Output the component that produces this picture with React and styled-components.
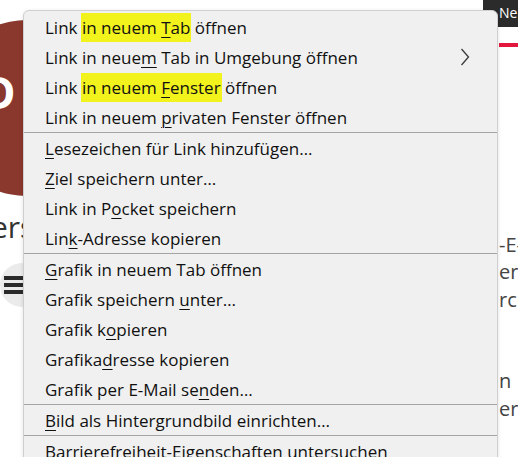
import React from "react";
import styled, { createGlobalStyle } from "styled-components";

const GlobalStyle = createGlobalStyle`
  html, body {
    margin: 0;
    padding: 0;
    overflow: hidden;
    background: #ffffff;
  }
`;

const Page = styled.div`
  position: relative;
  display: flex;
  width: 518px;
  height: 457px;
  overflow: hidden;
  background: #ffffff;
  font-family: "Open Sans", "Noto Sans", sans-serif;
`;

// left part of the page behind the menu
const Sidebar = styled.div`
  width: 120px;
  flex-shrink: 0;
  display: flex;
  flex-direction: column;
  align-items: flex-start;
`;

const Avatar = styled.div`
  flex-shrink: 0;
  box-sizing: border-box;
  width: 176px;
  height: 176px;
  margin: 20px 0 0 -61px;
  padding: 50px 0 0 44px;
  border-radius: 50%;
  background: #8a372d;
  color: #ffffff;
  font: 700 44px/1 "Open Sans", sans-serif;
`;

const UserName = styled.div`
  margin: 13px 0 0 -27px;
  font-size: 30px;
  line-height: 36px;
  color: #333333;
  white-space: nowrap;
`;

const MenuButton = styled.div`
  display: flex;
  flex-direction: column;
  justify-content: center;
  gap: 3px;
  box-sizing: border-box;
  width: 60px;
  height: 44px;
  margin-top: 18px;
  padding-left: 4px;
  border-radius: 22px;
  background: #ebebeb;
`;

const Bar = styled.span`
  display: block;
  width: 22px;
  height: 4px;
  background: #2a2a2a;
`;

const Middle = styled.div`
  flex: 1;
`;

// right part of the page behind the menu
const Aside = styled.div`
  width: 35px;
  flex-shrink: 0;
  display: flex;
  flex-direction: column;
  overflow: hidden;
`;

const NewButton = styled.div`
  height: 27px;
  padding-left: 16px;
  background: #2b2b2b;
  color: #ffffff;
  font-size: 14px;
  line-height: 26px;
  white-space: nowrap;
`;

const RedRule = styled.div`
  height: 4px;
  margin: 16px 0 0 16px;
  background: #e3173e;
`;

const Article = styled.div`
  margin: 184px 0 0 16px;
  font-size: 20px;
  line-height: 27.3px;
  color: #444444;
  white-space: nowrap;
`;

const Para = styled.p`
  margin: 0 0 ${(p) => p.gap || 0}px;
`;

// the context menu lies over the page
const ContextMenu = styled.div`
  position: absolute;
  left: 23px;
  top: 10px;
  width: 475px;
  box-sizing: border-box;
  padding-top: 1px;
  background: #f0f0f0;
  border: 1px solid #cfcfcf;
  border-radius: 6px 6px 0 0;
  box-shadow: 0 1px 4px rgba(0, 0, 0, 0.12);
  font-family: "Open Sans", "Noto Sans", sans-serif;
  font-size: 17px;
  color: #111111;
`;

const Item = styled.div`
  display: flex;
  align-items: center;
  justify-content: space-between;
  height: 30px;
  padding: 0 27px 0 21px;
  white-space: nowrap;
`;

const Separator = styled.div`
  height: 1px;
  background: #a3a3a3;
`;

const Key = styled.u`
  text-decoration-thickness: 1px;
  text-underline-offset: 3px;
`;

const Mark = styled.span`
  background: #f2f21c;
  padding: 3px 1px 3px;
  margin: 0 -1px;
`;

const Chevron = () => (
  <svg width="10" height="18" viewBox="0 0 10 18" fill="none">
    <path d="M1.5 1 L8.5 9 L1.5 17" stroke="#3a3a3a" strokeWidth="1.3" />
  </svg>
);

export default function App() {
  return (
    <>
      <GlobalStyle />
      <Page>
        <Sidebar>
          <Avatar>D</Avatar>
          <UserName>Versionen</UserName>
          <MenuButton>
            <Bar />
            <Bar />
            <Bar />
          </MenuButton>
        </Sidebar>
        <Middle />
        <Aside>
          <NewButton>Neu</NewButton>
          <RedRule />
          <Article>
            <Para>-E-Mail</Para>
            <Para>erhalten</Para>
            <Para gap={54.6}>rchiv</Para>
            <Para>n</Para>
            <Para>er</Para>
          </Article>
        </Aside>

        <ContextMenu>
          <Item>
            <span>
              Link <Mark>in neuem <Key>T</Key>ab</Mark> öffnen
            </span>
          </Item>
          <Item>
            <span>
              Link in neue<Key>m</Key> Tab in Umgebung öffnen
            </span>
            <Chevron />
          </Item>
          <Item>
            <span>
              Link <Mark>in neuem <Key>F</Key>enster</Mark> öffnen
            </span>
          </Item>
          <Item>
            <span>
              Link in neuem <Key>p</Key>rivaten Fenster öffnen
            </span>
          </Item>
          <Separator />
          <Item>
            <span>
              <Key>L</Key>esezeichen für Link hinzufügen…
            </span>
          </Item>
          <Item>
            <span>
              <Key>Z</Key>iel speichern unter…
            </span>
          </Item>
          <Item>
            <span>
              Link in P<Key>o</Key>cket speichern
            </span>
          </Item>
          <Item>
            <span>
              Lin<Key>k</Key>-Adresse kopieren
            </span>
          </Item>
          <Separator />
          <Item>
            <span>
              <Key>G</Key>rafik in neuem Tab öffnen
            </span>
          </Item>
          <Item>
            <span>
              Grafik speichern <Key>u</Key>nter…
            </span>
          </Item>
          <Item>
            <span>
              Grafik k<Key>o</Key>pieren
            </span>
          </Item>
          <Item>
            <span>
              Grafika<Key>d</Key>resse kopieren
            </span>
          </Item>
          <Item>
            <span>
              Grafik per E-Mail se<Key>n</Key>den…
            </span>
          </Item>
          <Separator />
          <Item>
            <span>
              <Key>B</Key>ild als Hintergrundbild einrichten…
            </span>
          </Item>
          <Separator />
          <Item>
            <span>Barrierefreiheit-Eigenschaften untersuchen</span>
          </Item>
        </ContextMenu>
      </Page>
    </>
  );
}
